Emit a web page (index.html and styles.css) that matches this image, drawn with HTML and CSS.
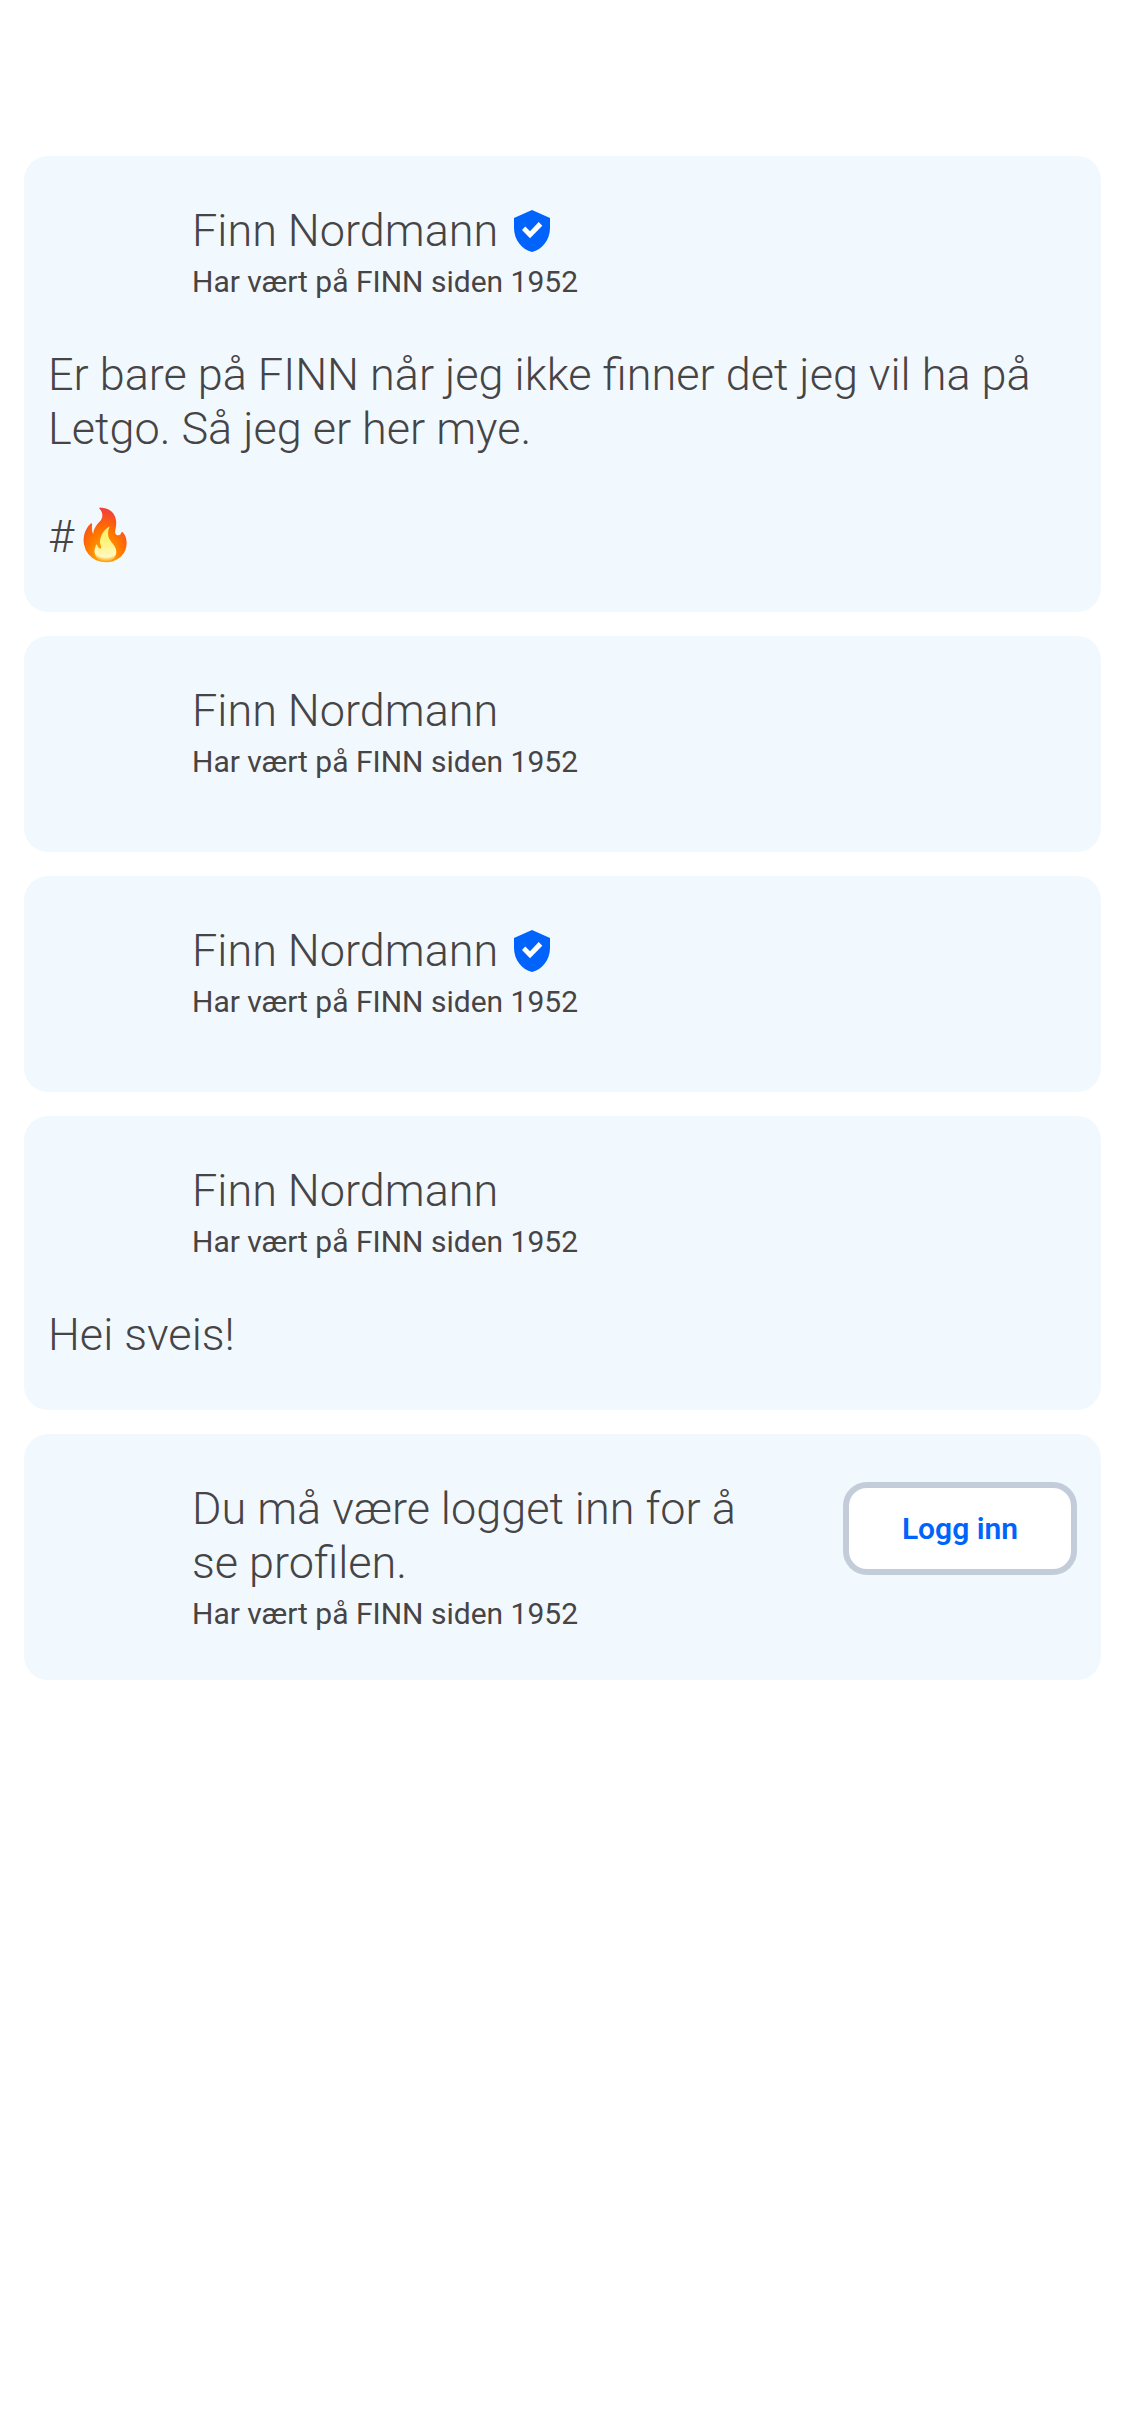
FILE: index.html
```html
<!DOCTYPE html>
<html lang="no">
<head>
  <meta charset="utf-8">
  <meta name="viewport" content="width=device-width, initial-scale=1">
  <title>Profil</title>
  <link rel="stylesheet" href="styles.css">
</head>
<body>
  <svg class="sprite" aria-hidden="true">
    <symbol id="verified" viewBox="0 0 36 42">
      <path fill="#0063fb" d="M18 0 36 8V18C36 30 28 39.500 18 42 8 39.500 0 30 0 18V8Z"/>
      <path fill="#fff" d="M8 20 11.300 16.500 16 21.300 24.700 12 28.300 15.800 16 28.300Z"/>
    </symbol>
  </svg>
  <main class="profiles">
    <article class="card">
      <header class="identity">
        <div class="avatar"></div>
        <div class="details">
          <h2 class="name">Finn Nordmann <svg class="badge" role="img" aria-label="Verifisert"><use href="#verified"/></svg></h2>
          <p class="since">Har vært på FINN siden 1952</p>
        </div>
      </header>
      <p class="bio">Er bare på FINN når jeg ikke finner det jeg vil ha på Letgo. Så jeg er her mye.<br><br>#<span class="emoji">🔥</span></p>
    </article>

    <article class="card">
      <header class="identity">
        <div class="avatar"></div>
        <div class="details">
          <h2 class="name">Finn Nordmann</h2>
          <p class="since">Har vært på FINN siden 1952</p>
        </div>
      </header>
    </article>

    <article class="card">
      <header class="identity">
        <div class="avatar"></div>
        <div class="details">
          <h2 class="name">Finn Nordmann <svg class="badge" role="img" aria-label="Verifisert"><use href="#verified"/></svg></h2>
          <p class="since">Har vært på FINN siden 1952</p>
        </div>
      </header>
    </article>

    <article class="card">
      <header class="identity">
        <div class="avatar"></div>
        <div class="details">
          <h2 class="name">Finn Nordmann</h2>
          <p class="since">Har vært på FINN siden 1952</p>
        </div>
      </header>
      <p class="bio">Hei sveis!</p>
    </article>

    <article class="card">
      <header class="identity">
        <div class="avatar"></div>
        <div class="details">
          <h2 class="name">Du må være logget inn for å se profilen.</h2>
          <p class="since">Har vært på FINN siden 1952</p>
        </div>
        <button class="login" type="button">Logg inn</button>
      </header>
    </article>
  </main>
</body>
</html>
```
FILE: styles.css
```css
* {
  box-sizing: border-box;
}

body {
  margin: 0;
  background: #fff;
  color: #474445;
  font-family: Roboto, "Liberation Sans", sans-serif;
}

h2,
p {
  margin: 0;
}

.sprite {
  display: none;
}

.profiles {
  display: flex;
  flex-direction: column;
  gap: 24px;
  padding: 156px 24px 24px;
}

.card {
  display: flex;
  flex-direction: column;
  gap: 24px;
  padding: 48px 24px;
  border-radius: 24px;
  background: #f1f9ff;
}

.identity {
  display: flex;
  align-items: flex-start;
  gap: 24px;
}

.avatar {
  flex: none;
  width: 120px;
  height: 120px;
}

.details {
  flex: 1;
}

.name {
  display: flex;
  align-items: center;
  gap: 16px;
  font-size: 45px;
  font-weight: 300;
  line-height: 54px;
}

.badge {
  width: 36px;
  height: 42px;
}

.since {
  margin-top: 6px;
  font-size: 30px;
  line-height: 36px;
}

.bio {
  font-size: 45px;
  font-weight: 300;
  line-height: 54px;
}

.emoji {
  font-size: 50px;
  line-height: 1;
}

.login {
  flex: none;
  margin-left: 60px;
  padding: 22px 53px;
  border: 6px solid #c3ccd9;
  border-radius: 24px;
  background: #fff;
  color: #0063fb;
  font-family: inherit;
  font-size: 30px;
  font-weight: 600;
  line-height: 37px;
}
```
